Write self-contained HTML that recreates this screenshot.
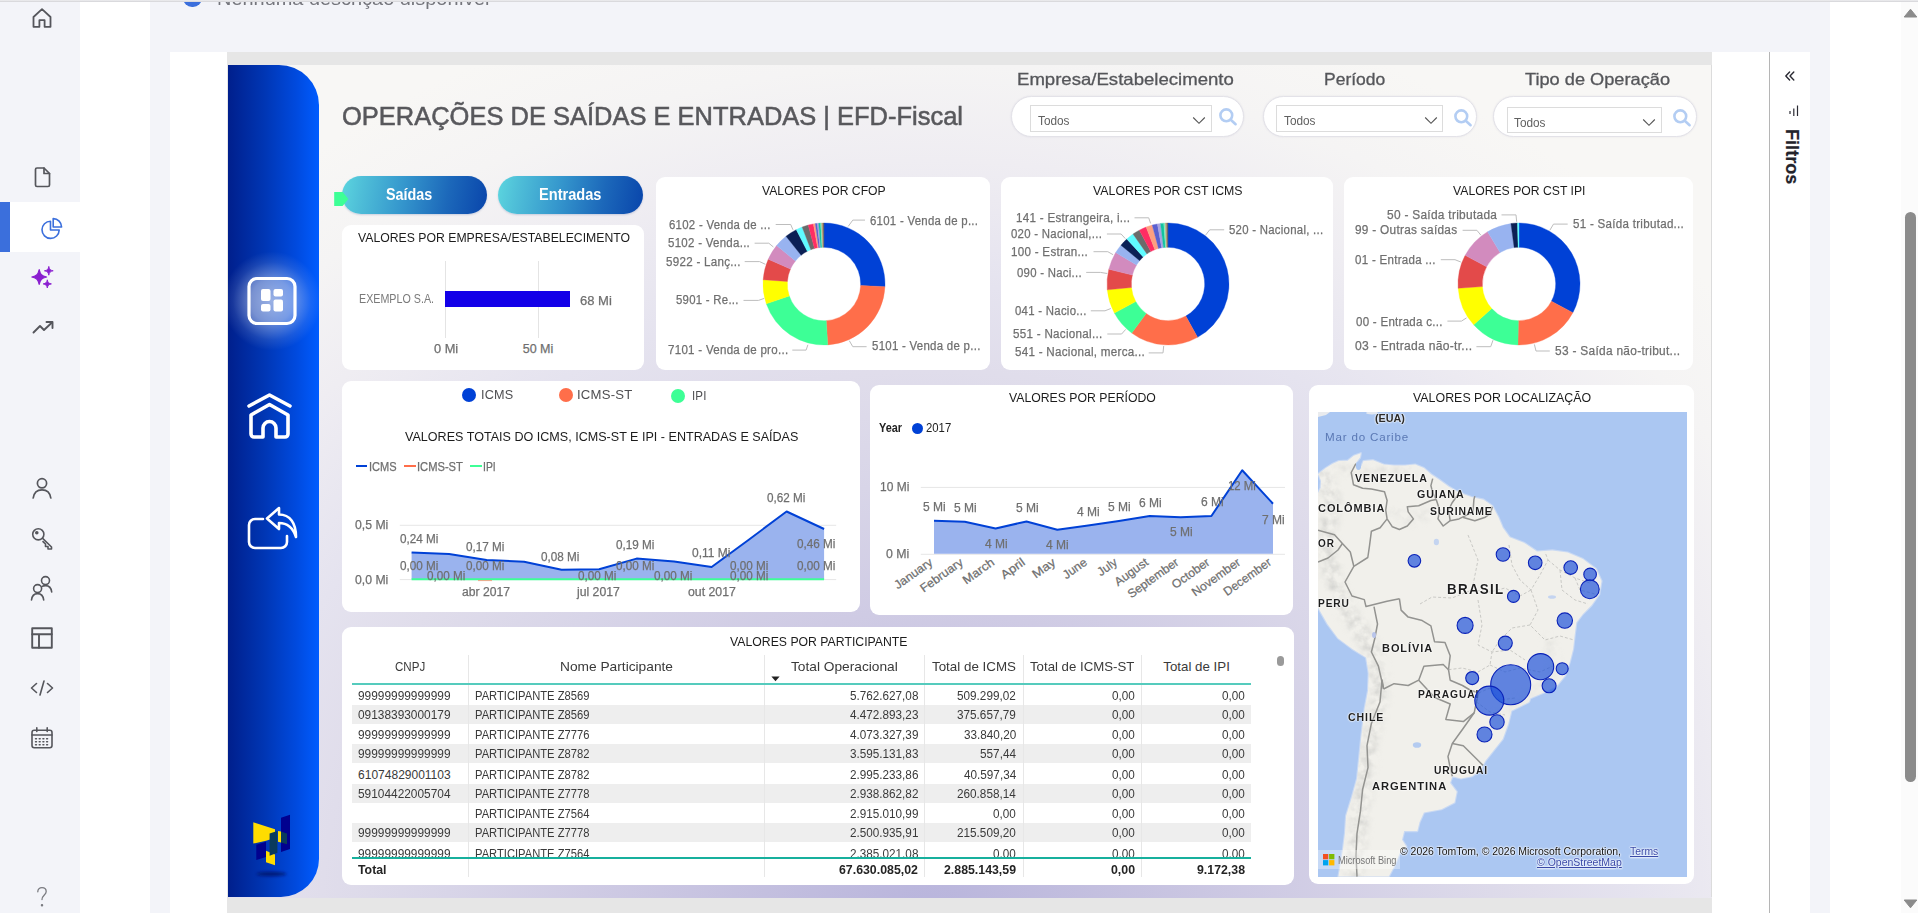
<!DOCTYPE html>
<html lang="pt-br">
<head>
<meta charset="utf-8">
<title>Operações de Saídas e Entradas | EFD-Fiscal</title>
<style>
*{box-sizing:border-box;margin:0;padding:0}
html,body{width:1918px;height:913px;overflow:hidden;background:#f3f4f9;font-family:"Liberation Sans",sans-serif;color:#333}
.abs{position:absolute}
.t{position:absolute;white-space:nowrap;line-height:1;font-family:"Liberation Sans",sans-serif}
.card{position:absolute;background:#fff;border-radius:9px}
#rc{left:170px;top:52px;width:1640px;height:861px;background:#fff}
#band{left:227px;top:52px;width:1485px;height:861px;background:#e6e6e6}
#cv{left:228px;top:65px;width:1484px;height:832.5px;overflow:hidden;background:radial-gradient(ellipse 1050px 956px at 702px 860px,#b8b4dc 0,#c3bfdf 16%,#cfcbe4 33%,#d8d5e8 46%,#e0ddeb 58%,#e5e3ef 67%,#efedf2 80%,#f5f4f4 90%,#f8f7f5 100%)}
#pg{left:-228px;top:-65px;width:1918px;height:913px}
</style>
</head>
<body>
<div class="abs" id="rc"></div>
<div class="abs" id="band"></div>
<div class="abs" style="left:1711px;top:65px;width:1px;height:832px;background:#dcdcdc;z-index:2"></div>
<div class="abs" id="cv"><div class="abs" id="pg">
<!-- sec_head -->
<div class="abs" style="left:228px;top:65px;width:91px;height:832px;border-radius:0 40px 38px 0;background:linear-gradient(90deg,#001f8c 0%,#0036b4 40%,#004ade 75%,#005cff 100%);overflow:hidden"><div class="abs" style="left:-6px;top:186px;width:100px;height:100px;background:radial-gradient(circle,rgba(255,255,255,.55) 0%,rgba(255,255,255,.4) 30%,rgba(255,255,255,.1) 55%,rgba(255,255,255,0) 70%)"></div></div>
<svg class="abs" style="left:246px;top:275px" width="52" height="52" viewBox="0 0 52 52"><rect x="3" y="3.5" width="46" height="45" rx="8" fill="rgba(255,255,255,.12)" stroke="#fff" stroke-width="3.2"/><rect x="15" y="14" width="9.5" height="12" rx="2" fill="#fff"/><rect x="27.5" y="14" width="9.5" height="7.5" rx="2" fill="#fff"/><rect x="15" y="29" width="9.5" height="7.5" rx="2" fill="#fff"/><rect x="27.5" y="24.5" width="9.5" height="12" rx="2" fill="#fff"/></svg>
<svg class="abs" style="left:246px;top:391px" width="48" height="50" viewBox="0 0 48 50" fill="none" stroke="#fff" stroke-width="3.6" stroke-linecap="round" stroke-linejoin="round"><path d="M3 15 L23.5 4 L44 15"/><path d="M5 24 L23.5 13.5 L42 24 V43 a3 3 0 0 1 -3 3 H30 V37 a6.5 6.5 0 0 0 -13 0 V46 H8 a3 3 0 0 1 -3 -3 Z"/></svg>
<svg class="abs" style="left:246px;top:505px" width="54" height="46" viewBox="0 0 54 46" fill="none" stroke="#fff" stroke-width="2.6" stroke-linecap="round" stroke-linejoin="round"><path d="M17 14 H9 a6 6 0 0 0 -6 6 V37 a6 6 0 0 0 6 6 H35 a6 6 0 0 0 6 -6 V31"/><path d="M33 3 L21 13.5 L33 24 V18 C42 18 47 23 50 32 C50 18 44 9.5 33 9.5 Z"/></svg>
<svg class="abs" style="left:248px;top:810px" width="52" height="72" viewBox="248 810 52 72"><defs><filter id="lsh" x="-30%" y="-200%" width="160%" height="500%"><feGaussianBlur stdDeviation="1.6"/></filter></defs><ellipse cx="271.4" cy="874" rx="15" ry="2.2" fill="#001060" opacity=".75" filter="url(#lsh)"/><polygon points="281,817.7 290,814.7 290,849 281,852" fill="#01018f"/><polygon points="253.3,822.3 275,829.2 275,838 266,840.8 253.3,843.6" fill="#ffdc00"/><polygon points="256.3,844.8 266,841.8 266,856.9 256.3,859.9" fill="#01018f"/><polygon points="266,850.8 275,854.5 275,865.3 266,862.3" fill="#ffdc00"/><polygon points="269.6,833.4 277.4,831 277.4,852.7 269.6,855.7" fill="#0a3a5c"/><polygon points="278,831 281,831.6 281,842.4 278,841.8" fill="#ffdc00"/><polygon points="281,831.6 287,833.4 287,844.2 281,842.4" fill="#0a3a5c"/></svg>
<span class="t" style="left:342.30px;top:102.99px;font-size:26px;color:#58585c;transform-origin:0 0;transform:scaleX(0.9799);-webkit-text-stroke:.55px #58585c;">OPERAÇÕES DE SAÍDAS E ENTRADAS | EFD-Fiscal</span>
<span class="t" style="left:1016.90px;top:71.33px;font-size:16.5px;color:#55565a;transform-origin:0 0;transform:scaleX(1.1256);-webkit-text-stroke:.3px #55565a;">Empresa/Estabelecimento</span><div class="abs" style="left:1010.5px;top:95.5px;width:233.0px;height:41px;border-radius:21px;background:#fff;border:1px solid #e3e2e8;box-shadow:0 0 2px rgba(120,120,160,.16)"></div><div class="abs" style="left:1030px;top:105px;width:182px;height:26.599999999999994px;background:#fff;border:1px solid #dcdcdc"></div><span class="t" style="left:1037.50px;top:114.54px;font-size:12px;color:#606060;transform-origin:0 0;transform:scaleX(0.9834);">Todos</span><svg class="abs" style="left:1191.8px;top:115.5px" width="14" height="9" viewBox="0 0 14 9" fill="none" stroke="#555" stroke-width="1.1"><path d="M1.2 1.5 L7 7.3 L12.8 1.5"/></svg><svg class="abs" style="left:1217px;top:106px" width="22" height="22" viewBox="0 0 22 22" fill="none" stroke="#b3cdf3" stroke-width="2.6" stroke-linecap="round"><circle cx="9.3" cy="9.3" r="5.9"/><path d="M14 14 L18.6 18.2"/></svg>
<span class="t" style="left:1324.00px;top:71.33px;font-size:16.5px;color:#55565a;transform-origin:0 0;transform:scaleX(1.0606);-webkit-text-stroke:.3px #55565a;">Período</span><div class="abs" style="left:1262.5px;top:95.5px;width:214.5px;height:41px;border-radius:21px;background:#fff;border:1px solid #e3e2e8;box-shadow:0 0 2px rgba(120,120,160,.16)"></div><div class="abs" style="left:1276px;top:105.3px;width:167px;height:26.299999999999997px;background:#fff;border:1px solid #dcdcdc"></div><span class="t" style="left:1284.00px;top:114.84px;font-size:12px;color:#606060;transform-origin:0 0;transform:scaleX(0.9834);">Todos</span><svg class="abs" style="left:1423.8px;top:115.8px" width="14" height="9" viewBox="0 0 14 9" fill="none" stroke="#555" stroke-width="1.1"><path d="M1.2 1.5 L7 7.3 L12.8 1.5"/></svg><svg class="abs" style="left:1451.5px;top:106.5px" width="22" height="22" viewBox="0 0 22 22" fill="none" stroke="#b3cdf3" stroke-width="2.6" stroke-linecap="round"><circle cx="9.3" cy="9.3" r="5.9"/><path d="M14 14 L18.6 18.2"/></svg>
<span class="t" style="left:1525.00px;top:71.33px;font-size:16.5px;color:#55565a;transform-origin:0 0;transform:scaleX(1.1029);-webkit-text-stroke:.3px #55565a;">Tipo de Operação</span><div class="abs" style="left:1493.3px;top:95.5px;width:203.70000000000005px;height:41px;border-radius:21px;background:#fff;border:1px solid #e3e2e8;box-shadow:0 0 2px rgba(120,120,160,.16)"></div><div class="abs" style="left:1506.5px;top:106.7px;width:155.5px;height:26.10000000000001px;background:#fff;border:1px solid #dcdcdc"></div><span class="t" style="left:1514.30px;top:116.84px;font-size:12px;color:#606060;transform-origin:0 0;transform:scaleX(0.9834);">Todos</span><svg class="abs" style="left:1642px;top:117.5px" width="14" height="9" viewBox="0 0 14 9" fill="none" stroke="#555" stroke-width="1.1"><path d="M1.2 1.5 L7 7.3 L12.8 1.5"/></svg><svg class="abs" style="left:1670.5px;top:106.5px" width="22" height="22" viewBox="0 0 22 22" fill="none" stroke="#b3cdf3" stroke-width="2.6" stroke-linecap="round"><circle cx="9.3" cy="9.3" r="5.9"/><path d="M14 14 L18.6 18.2"/></svg>
<!-- sec_row1 -->
<div class="abs" style="left:342px;top:176px;width:145px;height:37.5px;border-radius:19px;background:linear-gradient(100deg,#5cd6df 0%,#4fbfd8 14%,#3597cd 42%,#1c68ba 72%,#0945ab 100%);box-shadow:0 1px 2px rgba(0,40,120,.18)"></div>
<span class="t" style="left:385.80px;top:187.46px;font-size:16px;color:#fff;font-weight:bold;transform-origin:0 0;transform:scaleX(0.8955);">Saídas</span>
<div class="abs" style="left:497.7px;top:176px;width:145px;height:37.5px;border-radius:19px;background:linear-gradient(100deg,#5cd6df 0%,#4fbfd8 14%,#3597cd 42%,#1c68ba 72%,#0945ab 100%);box-shadow:0 1px 2px rgba(0,40,120,.18)"></div>
<span class="t" style="left:539.20px;top:187.46px;font-size:16px;color:#fff;font-weight:bold;transform-origin:0 0;transform:scaleX(0.9114);">Entradas</span>
<svg class="abs" style="left:333px;top:191px" width="17" height="17" viewBox="0 0 17 17"><path d="M1.2 1 H9.6 L15.4 8 L9.6 15 H1.2 Z" fill="#3dff96"/></svg>
<div class="card" style="left:342px;top:225px;width:302px;height:144.5px"></div>
<span class="t" style="left:357.80px;top:231.27px;font-size:13.5px;color:#1c1c1c;transform-origin:0 0;transform:scaleX(0.9064);">VALORES POR EMPRESA/ESTABELECIMENTO</span>
<div class="abs" style="left:445px;top:261px;width:1px;height:77px;background:#e4e4e4"></div>
<div class="abs" style="left:537.5px;top:261px;width:1px;height:77px;background:#e4e4e4"></div>
<div class="abs" style="left:445px;top:291px;width:125px;height:16px;background:#1300e8"></div>
<span class="t" style="left:359.40px;top:293.14px;font-size:12px;color:#7a7a7a;transform-origin:0 0;transform:scaleX(0.8925);">EXEMPLO S.A.</span>
<span class="t" style="left:579.70px;top:294.72px;font-size:12.5px;color:#6f6f6f;-webkit-text-stroke:.25px #6f6f6f;transform-origin:0 0;transform:scaleX(1.0400);">68 Mi</span>
<span class="t" style="left:433.70px;top:343.22px;font-size:12.5px;color:#6f6f6f;-webkit-text-stroke:.25px #6f6f6f;transform-origin:0 0;transform:scaleX(1.0243);">0 Mi</span>
<span class="t" style="left:522.70px;top:343.22px;font-size:12.5px;color:#6f6f6f;-webkit-text-stroke:.25px #6f6f6f;">50 Mi</span>
<div class="card" style="left:656px;top:177px;width:334px;height:193px"></div>
<span class="t" style="left:761.95px;top:184.37px;font-size:13.5px;color:#1c1c1c;transform-origin:0 0;transform:scaleX(0.9027);">VALORES POR CFOP</span>
<svg class="abs" style="left:760px;top:220px" width="128" height="128" viewBox="760 220 128 128" shape-rendering="geometricPrecision"><path d="M824.00 223.00A61 61 0 0 1 884.94 286.66L860.67 285.60A36.7 36.7 0 0 0 824.00 247.30Z" fill="#0041d6" stroke="#0041d6" stroke-width=".35"/><path d="M884.94 286.66A61 61 0 0 1 827.72 344.89L826.24 320.63A36.7 36.7 0 0 0 860.67 285.60Z" fill="#ff6e4a" stroke="#ff6e4a" stroke-width=".35"/><path d="M827.72 344.89A61 61 0 0 1 766.32 303.86L789.30 295.95A36.7 36.7 0 0 0 826.24 320.63Z" fill="#3dff96" stroke="#3dff96" stroke-width=".35"/><path d="M766.32 303.86A61 61 0 0 1 763.15 279.74L787.39 281.44A36.7 36.7 0 0 0 789.30 295.95Z" fill="#ffff00" stroke="#ffff00" stroke-width=".35"/><path d="M763.15 279.74A61 61 0 0 1 768.27 259.19L790.47 269.07A36.7 36.7 0 0 0 787.39 281.44Z" fill="#e34a4a" stroke="#e34a4a" stroke-width=".35"/><path d="M768.27 259.19A61 61 0 0 1 776.59 245.61L795.48 260.90A36.7 36.7 0 0 0 790.47 269.07Z" fill="#d28bbe" stroke="#d28bbe" stroke-width=".35"/><path d="M776.59 245.61A61 61 0 0 1 786.03 236.26L801.15 255.28A36.7 36.7 0 0 0 795.48 260.90Z" fill="#98b3f0" stroke="#98b3f0" stroke-width=".35"/><path d="M786.03 236.26A61 61 0 0 1 796.31 229.65L807.34 251.30A36.7 36.7 0 0 0 801.15 255.28Z" fill="#0b2055" stroke="#0b2055" stroke-width=".35"/><path d="M796.31 229.65A61 61 0 0 1 802.14 227.05L810.85 249.74A36.7 36.7 0 0 0 807.34 251.30Z" fill="#5ffbff" stroke="#5ffbff" stroke-width=".35"/><path d="M802.14 227.05A61 61 0 0 1 808.21 225.08L814.50 248.55A36.7 36.7 0 0 0 810.85 249.74Z" fill="#6b6b6b" stroke="#6b6b6b" stroke-width=".35"/><path d="M808.21 225.08A61 61 0 0 1 813.41 223.93L817.63 247.86A36.7 36.7 0 0 0 814.50 248.55Z" fill="#ff2d63" stroke="#ff2d63" stroke-width=".35"/><path d="M813.41 223.93A61 61 0 0 1 815.30 223.62L818.77 247.68A36.7 36.7 0 0 0 817.63 247.86Z" fill="#ffa080" stroke="#ffa080" stroke-width=".35"/><path d="M815.30 223.62A61 61 0 0 1 817.20 223.38L819.91 247.53A36.7 36.7 0 0 0 818.77 247.68Z" fill="#5b60d0" stroke="#5b60d0" stroke-width=".35"/><path d="M817.20 223.38A61 61 0 0 1 818.68 223.23L820.80 247.44A36.7 36.7 0 0 0 819.91 247.53Z" fill="#a9a3e0" stroke="#a9a3e0" stroke-width=".35"/><path d="M818.68 223.23A61 61 0 0 1 820.59 223.10L821.95 247.36A36.7 36.7 0 0 0 820.80 247.44Z" fill="#12c2a0" stroke="#12c2a0" stroke-width=".35"/><path d="M820.59 223.10A61 61 0 0 1 821.66 223.04L822.59 247.33A36.7 36.7 0 0 0 821.95 247.36Z" fill="#7af0c0" stroke="#7af0c0" stroke-width=".35"/><path d="M821.66 223.04A61 61 0 0 1 822.94 223.01L823.36 247.31A36.7 36.7 0 0 0 822.59 247.33Z" fill="#c9a27a" stroke="#c9a27a" stroke-width=".35"/><path d="M822.94 223.01A61 61 0 0 1 824.00 223.00L824.00 247.30A36.7 36.7 0 0 0 823.36 247.31Z" fill="#6b6b6b" stroke="#6b6b6b" stroke-width=".35"/></svg>
<svg class="abs" style="left:656px;top:177px" width="334" height="193" viewBox="656 177 334 193" fill="none" stroke="#bdbdbd" stroke-width="1"><polyline points="848.2,226.4 852.8,220.1 865.0,220.1"/><polyline points="775.7,224.5 790.7,224.5 793.0,229.8"/><polyline points="754.6,243.2 768.8,243.2 773.4,247.0"/><polyline points="744.7,261.6 759.6,261.6 765.4,264.3"/><polyline points="743.5,300.4 758.5,300.4 764.2,298.4"/><polyline points="792.3,350.1 806.1,350.1 807.9,344.8"/><polyline points="866.6,346.7 852.8,346.7 849.3,340.7"/></svg>
<span class="t" style="left:870.00px;top:215.42px;font-size:12.5px;color:#6f6f6f;-webkit-text-stroke:.25px #6f6f6f;transform-origin:0 0;transform:scaleX(0.9124);letter-spacing:.3px;">6101 - Venda de p...</span>
<span class="t" style="left:669.40px;top:218.82px;font-size:12.5px;color:#6f6f6f;-webkit-text-stroke:.25px #6f6f6f;transform-origin:0 0;transform:scaleX(0.9125);letter-spacing:.3px;">6102 - Venda de ...</span>
<span class="t" style="left:668.30px;top:237.22px;font-size:12.5px;color:#6f6f6f;-webkit-text-stroke:.25px #6f6f6f;transform-origin:0 0;transform:scaleX(0.9194);letter-spacing:.3px;">5102 - Venda...</span>
<span class="t" style="left:666.00px;top:256.22px;font-size:12.5px;color:#6f6f6f;-webkit-text-stroke:.25px #6f6f6f;transform-origin:0 0;transform:scaleX(0.9276);letter-spacing:.3px;">5922 - Lanç...</span>
<span class="t" style="left:676.30px;top:294.12px;font-size:12.5px;color:#6f6f6f;-webkit-text-stroke:.25px #6f6f6f;transform-origin:0 0;transform:scaleX(0.9097);letter-spacing:.3px;">5901 - Re...</span>
<span class="t" style="left:667.60px;top:344.22px;font-size:12.5px;color:#6f6f6f;-webkit-text-stroke:.25px #6f6f6f;transform-origin:0 0;transform:scaleX(0.9239);letter-spacing:.3px;">7101 - Venda de pro...</span>
<span class="t" style="left:871.90px;top:340.32px;font-size:12.5px;color:#6f6f6f;-webkit-text-stroke:.25px #6f6f6f;transform-origin:0 0;transform:scaleX(0.9157);letter-spacing:.3px;">5101 - Venda de p...</span>
<div class="card" style="left:1001px;top:177px;width:332px;height:193px"></div>
<span class="t" style="left:1093.00px;top:184.37px;font-size:13.5px;color:#1c1c1c;transform-origin:0 0;transform:scaleX(0.9133);">VALORES POR CST ICMS</span>
<svg class="abs" style="left:1103.8px;top:220px" width="128" height="128" viewBox="1103.8 220 128 128" shape-rendering="geometricPrecision"><path d="M1167.80 223.00A61 61 0 0 1 1197.37 337.35L1185.59 316.10A36.7 36.7 0 0 0 1167.80 247.30Z" fill="#0041d6" stroke="#0041d6" stroke-width=".35"/><path d="M1197.37 337.35A61 61 0 0 1 1131.52 333.04L1145.97 313.50A36.7 36.7 0 0 0 1185.59 316.10Z" fill="#ff6e4a" stroke="#ff6e4a" stroke-width=".35"/><path d="M1131.52 333.04A61 61 0 0 1 1114.19 313.11L1135.55 301.51A36.7 36.7 0 0 0 1145.97 313.50Z" fill="#3dff96" stroke="#3dff96" stroke-width=".35"/><path d="M1114.19 313.11A61 61 0 0 1 1107.08 289.85L1131.27 287.52A36.7 36.7 0 0 0 1135.55 301.51Z" fill="#ffff00" stroke="#ffff00" stroke-width=".35"/><path d="M1107.08 289.85A61 61 0 0 1 1108.61 269.24L1132.19 275.12A36.7 36.7 0 0 0 1131.27 287.52Z" fill="#e34a4a" stroke="#e34a4a" stroke-width=".35"/><path d="M1108.61 269.24A61 61 0 0 1 1115.51 252.58L1136.34 265.10A36.7 36.7 0 0 0 1132.19 275.12Z" fill="#d28bbe" stroke="#d28bbe" stroke-width=".35"/><path d="M1115.51 252.58A61 61 0 0 1 1120.73 245.20L1139.48 260.66A36.7 36.7 0 0 0 1136.34 265.10Z" fill="#98b3f0" stroke="#98b3f0" stroke-width=".35"/><path d="M1120.73 245.20A61 61 0 0 1 1126.59 239.03L1143.01 256.94A36.7 36.7 0 0 0 1139.48 260.66Z" fill="#0b2055" stroke="#0b2055" stroke-width=".35"/><path d="M1126.59 239.03A61 61 0 0 1 1132.81 234.03L1146.75 253.94A36.7 36.7 0 0 0 1143.01 256.94Z" fill="#5ffbff" stroke="#5ffbff" stroke-width=".35"/><path d="M1132.81 234.03A61 61 0 0 1 1139.16 230.14L1150.57 251.60A36.7 36.7 0 0 0 1146.75 253.94Z" fill="#6b6b6b" stroke="#6b6b6b" stroke-width=".35"/><path d="M1139.16 230.14A61 61 0 0 1 1145.94 227.05L1154.65 249.74A36.7 36.7 0 0 0 1150.57 251.60Z" fill="#ff2d63" stroke="#ff2d63" stroke-width=".35"/><path d="M1145.94 227.05A61 61 0 0 1 1152.01 225.08L1158.30 248.55A36.7 36.7 0 0 0 1154.65 249.74Z" fill="#ffa080" stroke="#ffa080" stroke-width=".35"/><path d="M1152.01 225.08A61 61 0 0 1 1157.21 223.93L1161.43 247.86A36.7 36.7 0 0 0 1158.30 248.55Z" fill="#5b60d0" stroke="#5b60d0" stroke-width=".35"/><path d="M1157.21 223.93A61 61 0 0 1 1160.37 223.45L1163.33 247.57A36.7 36.7 0 0 0 1161.43 247.86Z" fill="#a9a3e0" stroke="#a9a3e0" stroke-width=".35"/><path d="M1160.37 223.45A61 61 0 0 1 1163.54 223.15L1165.24 247.39A36.7 36.7 0 0 0 1163.33 247.57Z" fill="#12c2a0" stroke="#12c2a0" stroke-width=".35"/><path d="M1163.54 223.15A61 61 0 0 1 1165.03 223.06L1166.14 247.34A36.7 36.7 0 0 0 1165.24 247.39Z" fill="#7af0c0" stroke="#7af0c0" stroke-width=".35"/><path d="M1165.03 223.06A61 61 0 0 1 1166.52 223.01L1167.03 247.31A36.7 36.7 0 0 0 1166.14 247.34Z" fill="#c9a27a" stroke="#c9a27a" stroke-width=".35"/><path d="M1166.52 223.01A61 61 0 0 1 1167.80 223.00L1167.80 247.30A36.7 36.7 0 0 0 1167.03 247.31Z" fill="#6b6b6b" stroke="#6b6b6b" stroke-width=".35"/></svg>
<svg class="abs" style="left:1001px;top:177px" width="332" height="193" viewBox="1001 177 332 193" fill="none" stroke="#bdbdbd" stroke-width="1"><polyline points="1134.5,217.8 1148.7,217.8 1150.6,223.4"/><polyline points="1106.9,234.0 1121.1,234.0 1125.3,238.6"/><polyline points="1093.5,251.7 1107.8,251.7 1113.1,254.7"/><polyline points="1086.2,272.4 1100.4,272.4 1107.3,273.5"/><polyline points="1090.8,310.8 1105.0,310.8 1110.8,308.5"/><polyline points="1107.3,334.0 1121.6,334.0 1125.7,329.4"/><polyline points="1148.7,352.9 1163.0,352.9 1163.7,346.0"/><polyline points="1224.2,229.8 1209.7,229.8 1205.8,234.9"/></svg>
<span class="t" style="left:1016.00px;top:212.02px;font-size:12.5px;color:#6f6f6f;-webkit-text-stroke:.25px #6f6f6f;transform-origin:0 0;transform:scaleX(0.9297);letter-spacing:.3px;">141 - Estrangeira, i...</span>
<span class="t" style="left:1011.20px;top:228.12px;font-size:12.5px;color:#6f6f6f;-webkit-text-stroke:.25px #6f6f6f;transform-origin:0 0;transform:scaleX(0.9119);letter-spacing:.3px;">020 - Nacional,...</span>
<span class="t" style="left:1011.40px;top:246.02px;font-size:12.5px;color:#6f6f6f;-webkit-text-stroke:.25px #6f6f6f;transform-origin:0 0;transform:scaleX(0.9287);letter-spacing:.3px;">100 - Estran...</span>
<span class="t" style="left:1016.70px;top:266.92px;font-size:12.5px;color:#6f6f6f;-webkit-text-stroke:.25px #6f6f6f;transform-origin:0 0;transform:scaleX(0.9103);letter-spacing:.3px;">090 - Naci...</span>
<span class="t" style="left:1014.60px;top:305.12px;font-size:12.5px;color:#6f6f6f;-webkit-text-stroke:.25px #6f6f6f;transform-origin:0 0;transform:scaleX(0.9116);letter-spacing:.3px;">041 - Nacio...</span>
<span class="t" style="left:1013.20px;top:328.12px;font-size:12.5px;color:#6f6f6f;-webkit-text-stroke:.25px #6f6f6f;transform-origin:0 0;transform:scaleX(0.9311);letter-spacing:.3px;">551 - Nacional...</span>
<span class="t" style="left:1014.60px;top:346.12px;font-size:12.5px;color:#6f6f6f;-webkit-text-stroke:.25px #6f6f6f;transform-origin:0 0;transform:scaleX(0.9292);letter-spacing:.3px;">541 - Nacional, merca...</span>
<span class="t" style="left:1229.20px;top:224.22px;font-size:12.5px;color:#6f6f6f;-webkit-text-stroke:.25px #6f6f6f;transform-origin:0 0;transform:scaleX(0.9106);letter-spacing:.3px;">520 - Nacional, ...</span>
<div class="card" style="left:1344px;top:177px;width:349px;height:193px"></div>
<span class="t" style="left:1453.15px;top:184.37px;font-size:13.5px;color:#1c1c1c;transform-origin:0 0;transform:scaleX(0.9041);">VALORES POR CST IPI</span>
<svg class="abs" style="left:1455.4px;top:220px" width="128" height="128" viewBox="1455.4 220 128 128" shape-rendering="geometricPrecision"><path d="M1519.40 223.00A61 61 0 0 1 1573.26 312.64L1551.80 301.23A36.7 36.7 0 0 0 1519.40 247.30Z" fill="#0041d6" stroke="#0041d6" stroke-width=".35"/><path d="M1573.26 312.64A61 61 0 0 1 1518.34 344.99L1518.76 320.69A36.7 36.7 0 0 0 1551.80 301.23Z" fill="#ff6e4a" stroke="#ff6e4a" stroke-width=".35"/><path d="M1518.34 344.99A61 61 0 0 1 1474.07 324.82L1492.13 308.56A36.7 36.7 0 0 0 1518.76 320.69Z" fill="#3dff96" stroke="#3dff96" stroke-width=".35"/><path d="M1474.07 324.82A61 61 0 0 1 1458.55 288.26L1482.79 286.56A36.7 36.7 0 0 0 1492.13 308.56Z" fill="#ffff00" stroke="#ffff00" stroke-width=".35"/><path d="M1458.55 288.26A61 61 0 0 1 1465.54 255.36L1487.00 266.77A36.7 36.7 0 0 0 1482.79 286.56Z" fill="#e34a4a" stroke="#e34a4a" stroke-width=".35"/><path d="M1465.54 255.36A61 61 0 0 1 1487.98 231.71L1500.50 252.54A36.7 36.7 0 0 0 1487.00 266.77Z" fill="#d28bbe" stroke="#d28bbe" stroke-width=".35"/><path d="M1487.98 231.71A61 61 0 0 1 1511.33 223.54L1514.55 247.62A36.7 36.7 0 0 0 1500.50 252.54Z" fill="#98b3f0" stroke="#98b3f0" stroke-width=".35"/><path d="M1511.33 223.54A61 61 0 0 1 1517.91 223.02L1518.50 247.31A36.7 36.7 0 0 0 1514.55 247.62Z" fill="#0b2055" stroke="#0b2055" stroke-width=".35"/><path d="M1517.91 223.02A61 61 0 0 1 1519.40 223.00L1519.40 247.30A36.7 36.7 0 0 0 1518.50 247.31Z" fill="#5ffbff" stroke="#5ffbff" stroke-width=".35"/></svg>
<svg class="abs" style="left:1344px;top:177px" width="349" height="193" viewBox="1344 177 349 193" fill="none" stroke="#bdbdbd" stroke-width="1"><polyline points="1501.5,214.9 1516.0,214.9 1516.7,221.8"/><polyline points="1462.6,230.3 1476.9,230.3 1480.8,235.1"/><polyline points="1440.8,259.7 1455.0,259.7 1460.8,262.0"/><polyline points="1447.4,321.1 1461.5,321.1 1466.5,317.9"/><polyline points="1476.4,346.7 1490.7,346.7 1493.0,340.2"/><polyline points="1567.7,224.1 1553.5,224.1 1549.8,230.3"/><polyline points="1549.8,351.0 1536.0,351.0 1534.4,344.4"/></svg>
<span class="t" style="left:1386.70px;top:209.22px;font-size:12.5px;color:#6f6f6f;-webkit-text-stroke:.25px #6f6f6f;transform-origin:0 0;transform:scaleX(0.9517);letter-spacing:.3px;">50 - Saída tributada</span>
<span class="t" style="left:1355.40px;top:224.22px;font-size:12.5px;color:#6f6f6f;-webkit-text-stroke:.25px #6f6f6f;transform-origin:0 0;transform:scaleX(0.9461);letter-spacing:.3px;">99 - Outras saídas</span>
<span class="t" style="left:1355.40px;top:253.72px;font-size:12.5px;color:#6f6f6f;-webkit-text-stroke:.25px #6f6f6f;transform-origin:0 0;transform:scaleX(0.9236);letter-spacing:.3px;">01 - Entrada ...</span>
<span class="t" style="left:1356.10px;top:315.52px;font-size:12.5px;color:#6f6f6f;-webkit-text-stroke:.25px #6f6f6f;transform-origin:0 0;transform:scaleX(0.9219);letter-spacing:.3px;">00 - Entrada c...</span>
<span class="t" style="left:1354.50px;top:340.32px;font-size:12.5px;color:#6f6f6f;-webkit-text-stroke:.25px #6f6f6f;transform-origin:0 0;transform:scaleX(0.9674);letter-spacing:.3px;">03 - Entrada não-tr...</span>
<span class="t" style="left:1572.80px;top:218.22px;font-size:12.5px;color:#6f6f6f;-webkit-text-stroke:.25px #6f6f6f;transform-origin:0 0;transform:scaleX(0.9268);letter-spacing:.3px;">51 - Saída tributad...</span>
<span class="t" style="left:1555.10px;top:345.42px;font-size:12.5px;color:#6f6f6f;-webkit-text-stroke:.25px #6f6f6f;transform-origin:0 0;transform:scaleX(0.9530);letter-spacing:.3px;">53 - Saída não-tribut...</span>
<!-- sec_row2 -->
<div class="card" style="left:341.5px;top:380.5px;width:518px;height:231.5px"></div>
<div class="abs" style="left:462px;top:387.5px;width:14px;height:14px;border-radius:7px;background:#0041d6"></div>
<span class="t" style="left:480.60px;top:388.37px;font-size:13.5px;color:#4f4f52;transform-origin:0 0;transform:scaleX(0.9374);letter-spacing:.2px;">ICMS</span>
<div class="abs" style="left:558.5px;top:387.5px;width:14px;height:14px;border-radius:7px;background:#ff6e4a"></div>
<span class="t" style="left:577.20px;top:388.37px;font-size:13.5px;color:#4f4f52;transform-origin:0 0;transform:scaleX(0.9735);letter-spacing:.2px;">ICMS-ST</span>
<div class="abs" style="left:671px;top:388.5px;width:14px;height:14px;border-radius:7px;background:#3dff96"></div>
<span class="t" style="left:691.80px;top:388.77px;font-size:13.5px;color:#4f4f52;transform-origin:0 0;transform:scaleX(0.8533);letter-spacing:.2px;">IPI</span>
<span class="t" style="left:405.30px;top:429.77px;font-size:13.5px;color:#1c1c1c;transform-origin:0 0;transform:scaleX(0.9309);">VALORES TOTAIS DO ICMS, ICMS-ST E IPI - ENTRADAS E SAÍDAS</span>
<div class="abs" style="left:355.9px;top:465px;width:11.5px;height:2px;background:#0041d6"></div>
<span class="t" style="left:369.40px;top:460.84px;font-size:12px;color:#6f6f6f;-webkit-text-stroke:.25px #6f6f6f;transform-origin:0 0;transform:scaleX(0.9200);">ICMS</span>
<div class="abs" style="left:404px;top:465px;width:11.5px;height:2px;background:#ff6e4a"></div>
<span class="t" style="left:417.30px;top:460.84px;font-size:12px;color:#6f6f6f;-webkit-text-stroke:.25px #6f6f6f;transform-origin:0 0;transform:scaleX(0.9302);">ICMS-ST</span>
<div class="abs" style="left:470.2px;top:465px;width:11.5px;height:2px;background:#3dff96"></div>
<span class="t" style="left:483.40px;top:460.84px;font-size:12px;color:#6f6f6f;-webkit-text-stroke:.25px #6f6f6f;transform-origin:0 0;transform:scaleX(0.8656);">IPI</span>
<svg class="abs" style="left:341px;top:480px" width="519" height="110" viewBox="341 480 519 110"><path d="M399.8 525.3H836.2M399.8 579.6H836.2" stroke="#e6e6e6" stroke-width="1" fill="none"/><polygon points="411.6,579.2 411.6,552.4 449.1,554.0 486.6,560.0 524.1,561.7 561.6,569.8 599.1,569.3 636.6,558.6 674.1,561.4 711.6,567.0 749.1,539.5 786.6,511.5 824.1,529.0 824.1,579.2" fill="#9ab3ee"/><polyline points="411.6,552.4 449.1,554.0 486.6,560.0 524.1,561.7 561.6,569.8 599.1,569.3 636.6,558.6 674.1,561.4 711.6,567.0 749.1,539.5 786.6,511.5 824.1,529.0" fill="none" stroke="#0041d6" stroke-width="2" stroke-linejoin="round"/><path d="M411.6 579.2H824.1" stroke="#3dff96" stroke-width="2" fill="none"/><path d="M478 580.6H492" stroke="#ff6e4a" stroke-width="1" fill="none" opacity=".6"/></svg>
<span class="t" style="left:355.30px;top:518.82px;font-size:12.5px;color:#6f6f6f;-webkit-text-stroke:.25px #6f6f6f;transform-origin:0 0;transform:scaleX(0.9781);">0,5 Mi</span>
<span class="t" style="left:355.30px;top:573.52px;font-size:12.5px;color:#6f6f6f;-webkit-text-stroke:.25px #6f6f6f;transform-origin:0 0;transform:scaleX(0.9781);">0,0 Mi</span>
<span class="t" style="left:462.25px;top:585.82px;font-size:12.5px;color:#6f6f6f;-webkit-text-stroke:.25px #6f6f6f;transform-origin:0 0;transform:scaleX(0.9704);">abr 2017</span>
<span class="t" style="left:577.20px;top:585.82px;font-size:12.5px;color:#6f6f6f;-webkit-text-stroke:.25px #6f6f6f;transform-origin:0 0;transform:scaleX(0.9772);">jul 2017</span>
<span class="t" style="left:688.05px;top:585.82px;font-size:12.5px;color:#6f6f6f;-webkit-text-stroke:.25px #6f6f6f;transform-origin:0 0;transform:scaleX(0.9841);">out 2017</span>
<span class="t" style="left:400.40px;top:532.92px;font-size:12.5px;color:#6f6f6f;-webkit-text-stroke:.25px #6f6f6f;transform-origin:0 0;transform:scaleX(0.9366);">0,24 Mi</span>
<span class="t" style="left:465.70px;top:540.52px;font-size:12.5px;color:#6f6f6f;-webkit-text-stroke:.25px #6f6f6f;transform-origin:0 0;transform:scaleX(0.9366);">0,17 Mi</span>
<span class="t" style="left:541.10px;top:550.62px;font-size:12.5px;color:#6f6f6f;-webkit-text-stroke:.25px #6f6f6f;transform-origin:0 0;transform:scaleX(0.9366);">0,08 Mi</span>
<span class="t" style="left:616.30px;top:538.82px;font-size:12.5px;color:#6f6f6f;-webkit-text-stroke:.25px #6f6f6f;transform-origin:0 0;transform:scaleX(0.9366);">0,19 Mi</span>
<span class="t" style="left:691.50px;top:547.02px;font-size:12.5px;color:#6f6f6f;-webkit-text-stroke:.25px #6f6f6f;transform-origin:0 0;transform:scaleX(0.9581);">0,11 Mi</span>
<span class="t" style="left:766.90px;top:491.52px;font-size:12.5px;color:#6f6f6f;-webkit-text-stroke:.25px #6f6f6f;transform-origin:0 0;transform:scaleX(0.9366);">0,62 Mi</span>
<span class="t" style="left:797.30px;top:538.02px;font-size:12.5px;color:#6f6f6f;-webkit-text-stroke:.25px #6f6f6f;transform-origin:0 0;transform:scaleX(0.9366);">0,46 Mi</span>
<span class="t" style="left:400.40px;top:559.72px;font-size:12.5px;color:#6f6f6f;-webkit-text-stroke:.25px #6f6f6f;transform-origin:0 0;transform:scaleX(0.9366);">0,00 Mi</span>
<span class="t" style="left:465.70px;top:559.72px;font-size:12.5px;color:#6f6f6f;-webkit-text-stroke:.25px #6f6f6f;transform-origin:0 0;transform:scaleX(0.9366);">0,00 Mi</span>
<span class="t" style="left:616.30px;top:559.72px;font-size:12.5px;color:#6f6f6f;-webkit-text-stroke:.25px #6f6f6f;transform-origin:0 0;transform:scaleX(0.9366);">0,00 Mi</span>
<span class="t" style="left:729.80px;top:559.72px;font-size:12.5px;color:#6f6f6f;-webkit-text-stroke:.25px #6f6f6f;transform-origin:0 0;transform:scaleX(0.9366);">0,00 Mi</span>
<span class="t" style="left:797.30px;top:559.72px;font-size:12.5px;color:#6f6f6f;-webkit-text-stroke:.25px #6f6f6f;transform-origin:0 0;transform:scaleX(0.9366);">0,00 Mi</span>
<span class="t" style="left:427.40px;top:569.82px;font-size:12.5px;color:#6f6f6f;-webkit-text-stroke:.25px #6f6f6f;transform-origin:0 0;transform:scaleX(0.9366);">0,00 Mi</span>
<span class="t" style="left:578.30px;top:569.82px;font-size:12.5px;color:#6f6f6f;-webkit-text-stroke:.25px #6f6f6f;transform-origin:0 0;transform:scaleX(0.9366);">0,00 Mi</span>
<span class="t" style="left:654.30px;top:569.82px;font-size:12.5px;color:#6f6f6f;-webkit-text-stroke:.25px #6f6f6f;transform-origin:0 0;transform:scaleX(0.9366);">0,00 Mi</span>
<span class="t" style="left:729.80px;top:569.82px;font-size:12.5px;color:#6f6f6f;-webkit-text-stroke:.25px #6f6f6f;transform-origin:0 0;transform:scaleX(0.9366);">0,00 Mi</span>
<div class="card" style="left:869.5px;top:384.5px;width:423.5px;height:230.5px"></div>
<span class="t" style="left:1008.50px;top:390.97px;font-size:13.5px;color:#1c1c1c;transform-origin:0 0;transform:scaleX(0.9073);">VALORES POR PERÍODO</span>
<span class="t" style="left:878.60px;top:422.34px;font-size:12px;color:#222;font-weight:bold;transform-origin:0 0;transform:scaleX(0.9070);">Year</span>
<div class="abs" style="left:911.7px;top:422.6px;width:11.6px;height:11.6px;border-radius:6px;background:#0041d6"></div>
<span class="t" style="left:925.70px;top:422.02px;font-size:12.5px;color:#222;transform-origin:0 0;transform:scaleX(0.9061);">2017</span>
<svg class="abs" style="left:870px;top:440px" width="423" height="120" viewBox="870 440 423 120"><path d="M920.8 487.4H1285M920.8 554.3H1285" stroke="#e6e6e6" stroke-width="1" fill="none"/><polygon points="934.0,553.8 934.0,520.7 964.8,521.8 995.6,528.4 1026.5,521.5 1057.3,529.8 1088.1,525.6 1118.9,521.0 1149.7,516.0 1180.6,517.2 1211.4,516.0 1242.2,470.3 1273.0,503.7 1273.0,553.8" fill="#9ab3ee"/><polyline points="934.0,520.7 964.8,521.8 995.6,528.4 1026.5,521.5 1057.3,529.8 1088.1,525.6 1118.9,521.0 1149.7,516.0 1180.6,517.2 1211.4,516.0 1242.2,470.3 1273.0,503.7" fill="none" stroke="#0041d6" stroke-width="2" stroke-linejoin="round"/></svg>
<span class="t" style="left:880.00px;top:481.22px;font-size:12.5px;color:#6f6f6f;-webkit-text-stroke:.25px #6f6f6f;transform-origin:0 0;transform:scaleX(0.9582);">10 Mi</span>
<span class="t" style="left:886.00px;top:548.02px;font-size:12.5px;color:#6f6f6f;-webkit-text-stroke:.25px #6f6f6f;transform-origin:0 0;transform:scaleX(0.9862);">0 Mi</span>
<span class="t" style="left:923.00px;top:501.42px;font-size:12.5px;color:#6f6f6f;-webkit-text-stroke:.25px #6f6f6f;transform-origin:0 0;transform:scaleX(0.9608);">5 Mi</span>
<span class="t" style="left:953.70px;top:502.32px;font-size:12.5px;color:#6f6f6f;-webkit-text-stroke:.25px #6f6f6f;transform-origin:0 0;transform:scaleX(0.9608);">5 Mi</span>
<span class="t" style="left:984.60px;top:537.92px;font-size:12.5px;color:#6f6f6f;-webkit-text-stroke:.25px #6f6f6f;transform-origin:0 0;transform:scaleX(0.9608);">4 Mi</span>
<span class="t" style="left:1015.60px;top:502.32px;font-size:12.5px;color:#6f6f6f;-webkit-text-stroke:.25px #6f6f6f;transform-origin:0 0;transform:scaleX(0.9608);">5 Mi</span>
<span class="t" style="left:1046.30px;top:539.22px;font-size:12.5px;color:#6f6f6f;-webkit-text-stroke:.25px #6f6f6f;transform-origin:0 0;transform:scaleX(0.9608);">4 Mi</span>
<span class="t" style="left:1077.20px;top:505.82px;font-size:12.5px;color:#6f6f6f;-webkit-text-stroke:.25px #6f6f6f;transform-origin:0 0;transform:scaleX(0.9608);">4 Mi</span>
<span class="t" style="left:1107.90px;top:500.92px;font-size:12.5px;color:#6f6f6f;-webkit-text-stroke:.25px #6f6f6f;transform-origin:0 0;transform:scaleX(0.9608);">5 Mi</span>
<span class="t" style="left:1138.80px;top:496.82px;font-size:12.5px;color:#6f6f6f;-webkit-text-stroke:.25px #6f6f6f;transform-origin:0 0;transform:scaleX(0.9608);">6 Mi</span>
<span class="t" style="left:1169.50px;top:526.12px;font-size:12.5px;color:#6f6f6f;-webkit-text-stroke:.25px #6f6f6f;transform-origin:0 0;transform:scaleX(0.9608);">5 Mi</span>
<span class="t" style="left:1200.50px;top:495.92px;font-size:12.5px;color:#6f6f6f;-webkit-text-stroke:.25px #6f6f6f;transform-origin:0 0;transform:scaleX(0.9608);">6 Mi</span>
<span class="t" style="left:1262.10px;top:513.82px;font-size:12.5px;color:#6f6f6f;-webkit-text-stroke:.25px #6f6f6f;transform-origin:0 0;transform:scaleX(0.9608);">7 Mi</span>
<span class="t" style="left:1228.40px;top:479.52px;font-size:12.5px;color:#6f6f6f;-webkit-text-stroke:.25px #6f6f6f;transform-origin:0 0;transform:scaleX(0.9124);">12 Mi</span>
<span class="t" style="left:890.80px;top:554.44px;font-size:12px;color:#6f6f6f;-webkit-text-stroke:.25px #6f6f6f;transform-origin:42.70px 10.16px;transform:rotate(-35.5deg) scaleX(1.0304);">January</span>
<span class="t" style="left:916.29px;top:554.44px;font-size:12px;color:#6f6f6f;-webkit-text-stroke:.25px #6f6f6f;transform-origin:48.03px 10.16px;transform:rotate(-35.5deg) scaleX(1.0306);">February</span>
<span class="t" style="left:961.80px;top:554.44px;font-size:12px;color:#6f6f6f;-webkit-text-stroke:.25px #6f6f6f;transform-origin:33.34px 10.16px;transform:rotate(-35.5deg) scaleX(1.0647);">March</span>
<span class="t" style="left:1001.94px;top:554.44px;font-size:12px;color:#6f6f6f;-webkit-text-stroke:.25px #6f6f6f;transform-origin:24.02px 10.16px;transform:rotate(-35.5deg) scaleX(1.1034);">April</span>
<span class="t" style="left:1034.11px;top:554.44px;font-size:12px;color:#6f6f6f;-webkit-text-stroke:.25px #6f6f6f;transform-origin:22.67px 10.16px;transform:rotate(-35.5deg) scaleX(1.1247);">May</span>
<span class="t" style="left:1061.57px;top:554.44px;font-size:12px;color:#6f6f6f;-webkit-text-stroke:.25px #6f6f6f;transform-origin:26.03px 10.16px;transform:rotate(-35.5deg) scaleX(1.0180);">June</span>
<span class="t" style="left:1097.08px;top:554.44px;font-size:12px;color:#6f6f6f;-webkit-text-stroke:.25px #6f6f6f;transform-origin:21.34px 10.16px;transform:rotate(-35.5deg) scaleX(1.0073);">July</span>
<span class="t" style="left:1111.88px;top:554.44px;font-size:12px;color:#6f6f6f;-webkit-text-stroke:.25px #6f6f6f;transform-origin:37.36px 10.16px;transform:rotate(-35.5deg) scaleX(1.0305);">August</span>
<span class="t" style="left:1121.36px;top:554.44px;font-size:12px;color:#6f6f6f;-webkit-text-stroke:.25px #6f6f6f;transform-origin:58.70px 10.16px;transform:rotate(-35.5deg) scaleX(1.0136);">September</span>
<span class="t" style="left:1168.19px;top:554.44px;font-size:12px;color:#6f6f6f;-webkit-text-stroke:.25px #6f6f6f;transform-origin:42.69px 10.16px;transform:rotate(-35.5deg) scaleX(1.0190);">October</span>
<span class="t" style="left:1186.34px;top:554.44px;font-size:12px;color:#6f6f6f;-webkit-text-stroke:.25px #6f6f6f;transform-origin:55.36px 10.16px;transform:rotate(-35.5deg) scaleX(1.0206);">November</span>
<span class="t" style="left:1217.16px;top:554.44px;font-size:12px;color:#6f6f6f;-webkit-text-stroke:.25px #6f6f6f;transform-origin:55.36px 10.16px;transform:rotate(-35.5deg) scaleX(1.0025);">December</span>
<!-- sec_table -->
<div class="card" style="left:342px;top:627px;width:951.5px;height:257.5px"></div>
<span class="t" style="left:729.75px;top:634.57px;font-size:13.5px;color:#1c1c1c;transform-origin:0 0;transform:scaleX(0.9077);">VALORES POR PARTICIPANTE</span>
<div class="abs" style="left:352px;top:704.8px;width:899px;height:19.4px;background:#eeeeee"></div>
<div class="abs" style="left:352px;top:744.2px;width:899px;height:19.3px;background:#eeeeee"></div>
<div class="abs" style="left:352px;top:783.5px;width:899px;height:19.7px;background:#eeeeee"></div>
<div class="abs" style="left:352px;top:822.6px;width:899px;height:19.8px;background:#eeeeee"></div>
<div class="abs" style="left:468px;top:655px;width:1px;height:222px;background:#e7e7e7"></div>
<div class="abs" style="left:763.6px;top:655px;width:1px;height:222px;background:#e7e7e7"></div>
<div class="abs" style="left:924.4px;top:655px;width:1px;height:222px;background:#e7e7e7"></div>
<div class="abs" style="left:1022.6px;top:655px;width:1px;height:222px;background:#e7e7e7"></div>
<div class="abs" style="left:1141px;top:655px;width:1px;height:222px;background:#e7e7e7"></div>
<div class="abs" style="left:352px;top:683px;width:899px;height:2px;background:#55cbbd"></div>
<div class="abs" style="left:352px;top:857.4px;width:899px;height:1.3px;background:#17b09d"></div>
<span class="t" style="left:395.00px;top:659.64px;font-size:13.3px;color:#3a3a3a;transform-origin:0 0;transform:scaleX(0.8695);">CNPJ</span>
<span class="t" style="left:560.00px;top:659.64px;font-size:13.3px;color:#3a3a3a;transform-origin:0 0;transform:scaleX(1.0330);">Nome Participante</span>
<span class="t" style="left:791.30px;top:659.64px;font-size:13.3px;color:#3a3a3a;transform-origin:0 0;transform:scaleX(1.0320);">Total Operacional</span>
<span class="t" style="left:932.10px;top:659.64px;font-size:13.3px;color:#3a3a3a;transform-origin:0 0;transform:scaleX(1.0058);">Total de ICMS</span>
<span class="t" style="left:1030.30px;top:659.64px;font-size:13.3px;color:#3a3a3a;transform-origin:0 0;transform:scaleX(0.9949);">Total de ICMS-ST</span>
<span class="t" style="left:1163.30px;top:659.64px;font-size:13.3px;color:#3a3a3a;">Total de IPI</span>
<svg class="abs" style="left:770.5px;top:675.5px" width="9" height="6" viewBox="0 0 9 6"><path d="M0.4 0.6H8.6L4.5 5.2Z" fill="#222"/></svg>
<span class="t" style="left:358.10px;top:690.14px;font-size:12px;color:#3a3a3a;transform-origin:0 0;transform:scaleX(0.9900);">99999999999999</span>
<span class="t" style="left:474.90px;top:690.14px;font-size:12px;color:#3a3a3a;transform-origin:0 0;transform:scaleX(0.9322);">PARTICIPANTE Z8569</span>
<span class="t" style="left:849.50px;top:690.14px;font-size:12px;color:#3a3a3a;transform-origin:0 0;transform:scaleX(0.9761);">5.762.627,08</span>
<span class="t" style="left:957.30px;top:690.14px;font-size:12px;color:#3a3a3a;transform-origin:0 0;transform:scaleX(0.9790);">509.299,02</span>
<span class="t" style="left:1111.90px;top:690.14px;font-size:12px;color:#3a3a3a;transform-origin:0 0;transform:scaleX(0.9761);">0,00</span>
<span class="t" style="left:1221.90px;top:690.14px;font-size:12px;color:#3a3a3a;transform-origin:0 0;transform:scaleX(0.9761);">0,00</span>
<span class="t" style="left:358.10px;top:709.44px;font-size:12px;color:#3a3a3a;transform-origin:0 0;transform:scaleX(0.9900);">09138393000179</span>
<span class="t" style="left:474.90px;top:709.44px;font-size:12px;color:#3a3a3a;transform-origin:0 0;transform:scaleX(0.9322);">PARTICIPANTE Z8569</span>
<span class="t" style="left:849.50px;top:709.44px;font-size:12px;color:#3a3a3a;transform-origin:0 0;transform:scaleX(0.9761);">4.472.893,23</span>
<span class="t" style="left:957.30px;top:709.44px;font-size:12px;color:#3a3a3a;transform-origin:0 0;transform:scaleX(0.9790);">375.657,79</span>
<span class="t" style="left:1111.90px;top:709.44px;font-size:12px;color:#3a3a3a;transform-origin:0 0;transform:scaleX(0.9761);">0,00</span>
<span class="t" style="left:1221.90px;top:709.44px;font-size:12px;color:#3a3a3a;transform-origin:0 0;transform:scaleX(0.9761);">0,00</span>
<span class="t" style="left:358.10px;top:729.24px;font-size:12px;color:#3a3a3a;transform-origin:0 0;transform:scaleX(0.9900);">99999999999999</span>
<span class="t" style="left:474.90px;top:729.24px;font-size:12px;color:#3a3a3a;transform-origin:0 0;transform:scaleX(0.9322);">PARTICIPANTE Z7776</span>
<span class="t" style="left:849.50px;top:729.24px;font-size:12px;color:#3a3a3a;transform-origin:0 0;transform:scaleX(0.9761);">4.073.327,39</span>
<span class="t" style="left:963.90px;top:729.24px;font-size:12px;color:#3a3a3a;transform-origin:0 0;transform:scaleX(0.9777);">33.840,20</span>
<span class="t" style="left:1111.90px;top:729.24px;font-size:12px;color:#3a3a3a;transform-origin:0 0;transform:scaleX(0.9761);">0,00</span>
<span class="t" style="left:1221.90px;top:729.24px;font-size:12px;color:#3a3a3a;transform-origin:0 0;transform:scaleX(0.9761);">0,00</span>
<span class="t" style="left:358.10px;top:748.44px;font-size:12px;color:#3a3a3a;transform-origin:0 0;transform:scaleX(0.9900);">99999999999999</span>
<span class="t" style="left:474.90px;top:748.44px;font-size:12px;color:#3a3a3a;transform-origin:0 0;transform:scaleX(0.9322);">PARTICIPANTE Z8782</span>
<span class="t" style="left:849.50px;top:748.44px;font-size:12px;color:#3a3a3a;transform-origin:0 0;transform:scaleX(0.9761);">3.595.131,83</span>
<span class="t" style="left:980.10px;top:748.44px;font-size:12px;color:#3a3a3a;transform-origin:0 0;transform:scaleX(0.9808);">557,44</span>
<span class="t" style="left:1111.90px;top:748.44px;font-size:12px;color:#3a3a3a;transform-origin:0 0;transform:scaleX(0.9761);">0,00</span>
<span class="t" style="left:1221.90px;top:748.44px;font-size:12px;color:#3a3a3a;transform-origin:0 0;transform:scaleX(0.9761);">0,00</span>
<span class="t" style="left:358.10px;top:769.14px;font-size:12px;color:#3a3a3a;">61074829001103</span>
<span class="t" style="left:474.90px;top:769.14px;font-size:12px;color:#3a3a3a;transform-origin:0 0;transform:scaleX(0.9322);">PARTICIPANTE Z8782</span>
<span class="t" style="left:849.50px;top:769.14px;font-size:12px;color:#3a3a3a;transform-origin:0 0;transform:scaleX(0.9761);">2.995.233,86</span>
<span class="t" style="left:963.90px;top:769.14px;font-size:12px;color:#3a3a3a;transform-origin:0 0;transform:scaleX(0.9777);">40.597,34</span>
<span class="t" style="left:1111.90px;top:769.14px;font-size:12px;color:#3a3a3a;transform-origin:0 0;transform:scaleX(0.9761);">0,00</span>
<span class="t" style="left:1221.90px;top:769.14px;font-size:12px;color:#3a3a3a;transform-origin:0 0;transform:scaleX(0.9761);">0,00</span>
<span class="t" style="left:358.10px;top:788.34px;font-size:12px;color:#3a3a3a;transform-origin:0 0;transform:scaleX(0.9900);">59104422005704</span>
<span class="t" style="left:474.90px;top:788.34px;font-size:12px;color:#3a3a3a;transform-origin:0 0;transform:scaleX(0.9322);">PARTICIPANTE Z7778</span>
<span class="t" style="left:849.50px;top:788.34px;font-size:12px;color:#3a3a3a;transform-origin:0 0;transform:scaleX(0.9761);">2.938.862,82</span>
<span class="t" style="left:957.30px;top:788.34px;font-size:12px;color:#3a3a3a;transform-origin:0 0;transform:scaleX(0.9790);">260.858,14</span>
<span class="t" style="left:1111.90px;top:788.34px;font-size:12px;color:#3a3a3a;transform-origin:0 0;transform:scaleX(0.9761);">0,00</span>
<span class="t" style="left:1221.90px;top:788.34px;font-size:12px;color:#3a3a3a;transform-origin:0 0;transform:scaleX(0.9761);">0,00</span>
<span class="t" style="left:474.90px;top:808.44px;font-size:12px;color:#3a3a3a;transform-origin:0 0;transform:scaleX(0.9322);">PARTICIPANTE Z7564</span>
<span class="t" style="left:849.50px;top:808.44px;font-size:12px;color:#3a3a3a;transform-origin:0 0;transform:scaleX(0.9761);">2.915.010,99</span>
<span class="t" style="left:993.30px;top:808.44px;font-size:12px;color:#3a3a3a;transform-origin:0 0;transform:scaleX(0.9761);">0,00</span>
<span class="t" style="left:1111.90px;top:808.44px;font-size:12px;color:#3a3a3a;transform-origin:0 0;transform:scaleX(0.9761);">0,00</span>
<span class="t" style="left:1221.90px;top:808.44px;font-size:12px;color:#3a3a3a;transform-origin:0 0;transform:scaleX(0.9761);">0,00</span>
<span class="t" style="left:358.10px;top:827.34px;font-size:12px;color:#3a3a3a;transform-origin:0 0;transform:scaleX(0.9900);">99999999999999</span>
<span class="t" style="left:474.90px;top:827.34px;font-size:12px;color:#3a3a3a;transform-origin:0 0;transform:scaleX(0.9322);">PARTICIPANTE Z7778</span>
<span class="t" style="left:849.50px;top:827.34px;font-size:12px;color:#3a3a3a;transform-origin:0 0;transform:scaleX(0.9761);">2.500.935,91</span>
<span class="t" style="left:957.30px;top:827.34px;font-size:12px;color:#3a3a3a;transform-origin:0 0;transform:scaleX(0.9790);">215.509,20</span>
<span class="t" style="left:1111.90px;top:827.34px;font-size:12px;color:#3a3a3a;transform-origin:0 0;transform:scaleX(0.9761);">0,00</span>
<span class="t" style="left:1221.90px;top:827.34px;font-size:12px;color:#3a3a3a;transform-origin:0 0;transform:scaleX(0.9761);">0,00</span>
<div class="abs" style="left:352px;top:842px;width:899px;height:15.4px;overflow:hidden"><div class="abs" style="left:-352px;top:-842px;width:1918px;height:913px"><span class="t" style="left:358.10px;top:848.34px;font-size:12px;color:#3a3a3a;transform-origin:0 0;transform:scaleX(0.9900);">99999999999999</span><span class="t" style="left:474.90px;top:848.34px;font-size:12px;color:#3a3a3a;transform-origin:0 0;transform:scaleX(0.9322);">PARTICIPANTE Z7564</span><span class="t" style="left:849.50px;top:848.34px;font-size:12px;color:#3a3a3a;transform-origin:0 0;transform:scaleX(0.9761);">2.385.021,08</span><span class="t" style="left:993.30px;top:848.34px;font-size:12px;color:#3a3a3a;transform-origin:0 0;transform:scaleX(0.9761);">0,00</span><span class="t" style="left:1111.90px;top:848.34px;font-size:12px;color:#3a3a3a;transform-origin:0 0;transform:scaleX(0.9761);">0,00</span><span class="t" style="left:1221.90px;top:848.34px;font-size:12px;color:#3a3a3a;transform-origin:0 0;transform:scaleX(0.9761);">0,00</span></div></div>
<span class="t" style="left:358.10px;top:864.14px;font-size:12px;color:#252525;font-weight:bold;transform-origin:0 0;transform:scaleX(1.0259);">Total</span>
<span class="t" style="left:839.00px;top:864.14px;font-size:12px;color:#252525;font-weight:bold;transform-origin:0 0;transform:scaleX(1.0280);">67.630.085,02</span>
<span class="t" style="left:944.10px;top:864.14px;font-size:12px;color:#252525;font-weight:bold;transform-origin:0 0;transform:scaleX(1.0274);">2.885.143,59</span>
<span class="t" style="left:1110.70px;top:864.14px;font-size:12px;color:#252525;font-weight:bold;transform-origin:0 0;transform:scaleX(1.0274);">0,00</span>
<span class="t" style="left:1196.70px;top:864.14px;font-size:12px;color:#252525;font-weight:bold;transform-origin:0 0;transform:scaleX(1.0274);">9.172,38</span>
<div class="abs" style="left:1276.5px;top:655.5px;width:7.5px;height:10px;border-radius:3.5px;background:#9a9a9a"></div>
<!-- sec_map -->
<div class="card" style="left:1308.5px;top:385px;width:385.5px;height:499.3px"></div>
<span class="t" style="left:1413.00px;top:391.37px;font-size:13.5px;color:#1c1c1c;transform-origin:0 0;transform:scaleX(0.9183);">VALORES POR LOCALIZAÇÃO</span>
<svg class="abs" style="left:1318px;top:412px" width="369" height="464.6" viewBox="1318 412 369 464.6"><defs><linearGradient id="and" x1="0" x2="1"><stop offset="0" stop-color="#d9d8d2" stop-opacity="0"/><stop offset=".5" stop-color="#c9c8c2" stop-opacity=".55"/><stop offset="1" stop-color="#d9d8d2" stop-opacity="0"/></linearGradient><filter id="nz" x="0" y="0" width="100%" height="100%"><feTurbulence type="fractalNoise" baseFrequency="0.11" numOctaves="3" seed="7"/><feColorMatrix values="0 0 0 0 0.62  0 0 0 0 0.62  0 0 0 0 0.6  1.6 0 0 0 -0.55"/></filter><filter id="bl" x="-20%" y="-20%" width="140%" height="140%"><feGaussianBlur stdDeviation="3.5"/></filter><mask id="am" maskUnits="userSpaceOnUse" x="1318" y="412" width="370" height="465"><g filter="url(#bl)" fill="none" stroke="#fff" stroke-linejoin="round" stroke-linecap="round"><polyline points="1322,472 1332,500 1326,540 1332,575 1344,605 1360,630 1374,655 1380,690 1372,725 1366,760 1362,800 1357,840 1354,880" stroke-width="17"/><polyline points="1340,466 1362,474 1390,470 1412,472" stroke-width="8" stroke="#aaa"/><polyline points="1395,512 1412,520 1430,512" stroke-width="10" stroke="#888"/><polyline points="1548,640 1556,665 1545,685 1520,700 1500,715" stroke-width="9" stroke="#777"/></g></mask><clipPath id="lc"><polygon points="1318.0,474.2 1325.8,468.1 1332.8,463.7 1338.9,461.1 1347.7,460.7 1353.8,455.8 1360.8,453.2 1360.0,457.6 1355.9,462.8 1357.3,469.0 1361.7,465.5 1363.5,461.1 1373.1,460.2 1383.6,464.6 1394.1,465.5 1404.7,465.5 1415.2,464.6 1423.9,468.1 1430.9,474.2 1438.8,479.5 1448.5,486.5 1459.0,492.6 1471.3,497.0 1483.5,499.7 1492.3,505.8 1498.4,517.2 1502.8,527.7 1509.6,537.2 1523.8,542.7 1536.9,551.5 1552.3,550.4 1567.6,552.6 1582.9,559.1 1596.0,569.0 1601.5,581.0 1599.3,594.2 1591.7,605.1 1582.9,613.9 1576.3,622.6 1574.6,635.8 1573.1,648.9 1569.8,662.0 1565.4,675.2 1556.6,686.1 1543.5,692.7 1530.4,698.2 1529.0,701.9 1511.4,710.7 1508.2,723.8 1502.7,739.1 1493.9,750.1 1485.2,761.0 1480.8,769.8 1472.0,776.3 1461.1,778.5 1452.3,776.3 1450.1,782.9 1456.7,791.7 1454.5,802.6 1441.4,809.2 1423.9,812.5 1419.5,822.3 1417.3,831.1 1404.2,831.1 1402.0,839.8 1406.3,846.4 1399.8,853.0 1395.4,863.9 1388.8,876.6 1338.5,876.6 1342.8,850.8 1345.0,833.3 1346.1,815.8 1351.6,798.2 1357.1,778.5 1359.3,756.6 1361.5,734.7 1364.7,708.5 1368.0,690.9 1368.7,673.2 1366.1,657.4 1352.1,648.7 1338.0,638.2 1327.5,624.1 1318.0,607.5 1318.0,493.0 1320.6,488.0 1321.0,481.0 1319.2,476.0"/></clipPath></defs><rect x="1318" y="412" width="370" height="465" fill="#abc7f2"/><polygon points="1318.0,474.2 1325.8,468.1 1332.8,463.7 1338.9,461.1 1347.7,460.7 1353.8,455.8 1360.8,453.2 1360.0,457.6 1355.9,462.8 1357.3,469.0 1361.7,465.5 1363.5,461.1 1373.1,460.2 1383.6,464.6 1394.1,465.5 1404.7,465.5 1415.2,464.6 1423.9,468.1 1430.9,474.2 1438.8,479.5 1448.5,486.5 1459.0,492.6 1471.3,497.0 1483.5,499.7 1492.3,505.8 1498.4,517.2 1502.8,527.7 1509.6,537.2 1523.8,542.7 1536.9,551.5 1552.3,550.4 1567.6,552.6 1582.9,559.1 1596.0,569.0 1601.5,581.0 1599.3,594.2 1591.7,605.1 1582.9,613.9 1576.3,622.6 1574.6,635.8 1573.1,648.9 1569.8,662.0 1565.4,675.2 1556.6,686.1 1543.5,692.7 1530.4,698.2 1529.0,701.9 1511.4,710.7 1508.2,723.8 1502.7,739.1 1493.9,750.1 1485.2,761.0 1480.8,769.8 1472.0,776.3 1461.1,778.5 1452.3,776.3 1450.1,782.9 1456.7,791.7 1454.5,802.6 1441.4,809.2 1423.9,812.5 1419.5,822.3 1417.3,831.1 1404.2,831.1 1402.0,839.8 1406.3,846.4 1399.8,853.0 1395.4,863.9 1388.8,876.6 1338.5,876.6 1342.8,850.8 1345.0,833.3 1346.1,815.8 1351.6,798.2 1357.1,778.5 1359.3,756.6 1361.5,734.7 1364.7,708.5 1368.0,690.9 1368.7,673.2 1366.1,657.4 1352.1,648.7 1338.0,638.2 1327.5,624.1 1318.0,607.5 1318.0,493.0 1320.6,488.0 1321.0,481.0 1319.2,476.0" fill="#f1f0eb" stroke="#c9d9f3" stroke-width="2.2" stroke-linejoin="round"/><polygon points="1318.0,474.2 1325.8,468.1 1332.8,463.7 1338.9,461.1 1347.7,460.7 1353.8,455.8 1360.8,453.2 1360.0,457.6 1355.9,462.8 1357.3,469.0 1361.7,465.5 1363.5,461.1 1373.1,460.2 1383.6,464.6 1394.1,465.5 1404.7,465.5 1415.2,464.6 1423.9,468.1 1430.9,474.2 1438.8,479.5 1448.5,486.5 1459.0,492.6 1471.3,497.0 1483.5,499.7 1492.3,505.8 1498.4,517.2 1502.8,527.7 1509.6,537.2 1523.8,542.7 1536.9,551.5 1552.3,550.4 1567.6,552.6 1582.9,559.1 1596.0,569.0 1601.5,581.0 1599.3,594.2 1591.7,605.1 1582.9,613.9 1576.3,622.6 1574.6,635.8 1573.1,648.9 1569.8,662.0 1565.4,675.2 1556.6,686.1 1543.5,692.7 1530.4,698.2 1529.0,701.9 1511.4,710.7 1508.2,723.8 1502.7,739.1 1493.9,750.1 1485.2,761.0 1480.8,769.8 1472.0,776.3 1461.1,778.5 1452.3,776.3 1450.1,782.9 1456.7,791.7 1454.5,802.6 1441.4,809.2 1423.9,812.5 1419.5,822.3 1417.3,831.1 1404.2,831.1 1402.0,839.8 1406.3,846.4 1399.8,853.0 1395.4,863.9 1388.8,876.6 1338.5,876.6 1342.8,850.8 1345.0,833.3 1346.1,815.8 1351.6,798.2 1357.1,778.5 1359.3,756.6 1361.5,734.7 1364.7,708.5 1368.0,690.9 1368.7,673.2 1366.1,657.4 1352.1,648.7 1338.0,638.2 1327.5,624.1 1318.0,607.5 1318.0,493.0 1320.6,488.0 1321.0,481.0 1319.2,476.0" fill="#f1f0eb"/><g clip-path="url(#lc)"><rect x="1318" y="412" width="370" height="465" filter="url(#nz)" mask="url(#am)"/></g><g fill="none" stroke="#b9b9b6" stroke-width=".9" stroke-dasharray="3 2" opacity=".8"><polyline points="1468.0,535.0 1478.0,560.0 1472.0,590.0 1452.0,598.0 1432.0,597.0 1420.0,604.0"/><polyline points="1472.0,590.0 1490.0,592.0 1505.0,588.0 1520.0,596.0 1531.0,590.0"/><polyline points="1509.0,545.0 1512.0,565.0 1520.0,580.0 1531.0,590.0 1540.0,575.0 1548.0,560.0 1545.0,552.0"/><polyline points="1548.0,560.0 1560.0,570.0 1575.0,578.0 1590.0,583.0"/><polyline points="1531.0,590.0 1538.0,610.0 1530.0,625.0 1545.0,640.0 1560.0,636.0 1574.0,640.0"/><polyline points="1478.0,600.0 1482.0,625.0 1478.0,645.0 1492.0,652.0 1510.0,650.0 1525.0,660.0"/><polyline points="1530.0,625.0 1512.0,628.0 1500.0,640.0 1492.0,652.0"/><polyline points="1448.5,669.7 1462.0,668.0 1478.0,672.0 1490.0,665.0 1492.0,652.0"/><polyline points="1490.0,665.0 1505.0,672.0 1520.0,668.0 1540.0,672.0 1555.0,665.0"/><polyline points="1478.6,693.0 1490.0,688.0 1500.0,700.0 1515.0,698.0"/><polyline points="1476.4,701.9 1490.0,712.0 1505.0,715.0"/><polyline points="1560.0,570.0 1562.0,590.0 1575.0,600.0 1588.0,604.0"/><polyline points="1575.0,578.0 1580.0,590.0 1595.0,594.0"/></g><g fill="none" stroke="#939390" stroke-width="1.5" stroke-linejoin="round"><polyline points="1355.9,463.7 1351.2,472.5 1353.5,484.8 1362.6,488.3 1371.4,489.1 1384.5,491.8 1387.1,500.5 1385.7,510.2 1387.1,518.9"/><polyline points="1387.1,518.9 1392.4,526.8 1399.4,529.5 1407.3,526.0 1413.4,518.9 1408.2,511.9 1407.3,506.7 1418.7,505.8 1430.9,500.5 1436.2,499.6"/><polyline points="1436.2,499.6 1432.7,492.6 1430.9,485.6 1432.7,478.6"/><polyline points="1436.2,499.6 1439.7,510.2 1438.0,518.9 1443.2,526.0 1450.2,520.7 1459.0,518.9 1462.5,517.2"/><polyline points="1450.2,520.7 1448.5,510.2 1452.0,503.0 1459.0,493.0"/><polyline points="1462.5,517.2 1473.0,512.0 1473.9,499.6 1474.8,496.1"/><polyline points="1462.5,517.2 1474.8,520.7 1485.3,517.2 1490.5,513.7 1492.3,506.7"/><polyline points="1387.1,518.9 1380.1,527.7 1371.4,531.2 1369.6,545.2 1367.8,557.5 1353.8,566.3 1345.0,582.0 1352.0,596.0 1364.3,599.6 1366.0,606.6 1387.0,601.3 1399.4,598.7"/><polyline points="1318.0,530.3 1334.5,534.7 1342.4,543.5 1350.3,552.0 1353.8,566.3"/><polyline points="1318.0,562.0 1328.0,558.0 1338.0,550.0 1342.4,543.5"/><polyline points="1399.4,598.7 1401.1,610.1 1408.2,617.1 1422.2,620.6 1430.9,625.9 1434.5,641.7 1445.0,642.5 1450.2,655.7 1448.5,669.7"/><polyline points="1374.0,606.6 1377.5,624.0 1374.9,638.0 1371.4,652.0 1378.4,666.2 1383.6,689.0"/><polyline points="1383.6,689.0 1394.1,683.7 1408.2,685.5 1418.7,680.2 1423.9,666.2 1443.2,664.5 1448.5,669.7"/><polyline points="1448.5,669.7 1450.2,680.2 1462.5,685.5 1470.0,690.0 1478.6,693.0 1476.4,701.9 1474.2,712.8"/><polyline points="1418.7,680.2 1434.8,697.5 1450.2,704.0 1445.8,719.4 1463.3,721.6 1474.2,712.8"/><polyline points="1474.2,712.8 1463.3,728.2 1452.3,743.5 1448.0,756.6 1450.1,767.6 1452.3,776.3"/><polyline points="1452.3,743.5 1463.3,745.7 1476.4,758.8 1483.0,765.4"/><polyline points="1383.6,689.0 1382.0,680.0 1380.0,702.0 1371.3,723.8 1367.0,745.7 1368.0,767.6 1362.6,789.5 1360.4,811.4 1357.0,833.3 1356.0,855.2 1357.0,876.6"/></g><ellipse cx="1417" cy="745" rx="4.2" ry="2.8" fill="#b4cbf0"/><ellipse cx="1436.4" cy="542" rx="2.6" ry="3.2" fill="#c4d4f0"/><ellipse cx="1552" cy="597" rx="4" ry="1.8" fill="#c4d4f0"/><ellipse cx="1358.5" cy="466" rx="2.6" ry="4" fill="#abc7f2"/><ellipse cx="1374" cy="635" rx="2" ry="3" fill="#b8c4ea"/><path d="M1318 412H1330L1326 415L1318 417Z" fill="#e9ebee"/><ellipse cx="1372" cy="413" rx="6" ry="1.5" fill="#e3e8f0"/></svg>
<span class="t" style="left:1374.90px;top:412.81px;font-size:10.5px;color:#2a2a2a;font-weight:bold;transform-origin:0 0;transform:scaleX(1.0250);text-shadow:0 0 2px #fff,0 0 2px #fff,0 0 1px #fff;">(EUA)</span>
<span class="t" style="left:1325.00px;top:432.47px;font-size:11.5px;color:#5a78b4;transform-origin:0 0;transform:scaleX(1.0088);letter-spacing:.8px;">Mar do Caribe</span>
<span class="t" style="left:1354.70px;top:472.87px;font-size:11.5px;color:#1e1e1e;font-weight:bold;transform-origin:0 0;transform:scaleX(0.9255);letter-spacing:1px;text-shadow:0 0 2px #fff,0 0 2px #fff,0 0 1px #fff;">VENEZUELA</span>
<span class="t" style="left:1416.70px;top:489.37px;font-size:11.5px;color:#1e1e1e;font-weight:bold;transform-origin:0 0;transform:scaleX(0.9265);letter-spacing:1px;text-shadow:0 0 2px #fff,0 0 2px #fff,0 0 1px #fff;">GUIANA</span>
<span class="t" style="left:1318.00px;top:503.07px;font-size:11.5px;color:#1e1e1e;font-weight:bold;transform-origin:0 0;transform:scaleX(0.9545);letter-spacing:1px;text-shadow:0 0 2px #fff,0 0 2px #fff,0 0 1px #fff;">COLÔMBIA</span>
<span class="t" style="left:1429.50px;top:505.67px;font-size:11.5px;color:#1e1e1e;font-weight:bold;transform-origin:0 0;transform:scaleX(0.9042);letter-spacing:1px;text-shadow:0 0 2px #fff,0 0 2px #fff,0 0 1px #fff;">SURINAME</span>
<span class="t" style="left:1318.00px;top:537.77px;font-size:11.5px;color:#1e1e1e;font-weight:bold;transform-origin:0 0;transform:scaleX(0.8675);letter-spacing:1px;text-shadow:0 0 2px #fff,0 0 2px #fff,0 0 1px #fff;">OR</span>
<span class="t" style="left:1446.60px;top:580.88px;font-size:15.5px;color:#1e1e1e;font-weight:bold;transform-origin:0 0;transform:scaleX(0.8620);letter-spacing:1.5px;text-shadow:0 0 2px #fff,0 0 2px #fff,0 0 1px #fff;">BRASIL</span>
<span class="t" style="left:1318.00px;top:597.57px;font-size:11.5px;color:#1e1e1e;font-weight:bold;transform-origin:0 0;transform:scaleX(0.8845);letter-spacing:1px;text-shadow:0 0 2px #fff,0 0 2px #fff,0 0 1px #fff;">PERU</span>
<span class="t" style="left:1382.00px;top:642.67px;font-size:11.5px;color:#1e1e1e;font-weight:bold;transform-origin:0 0;transform:scaleX(0.9545);letter-spacing:1px;text-shadow:0 0 2px #fff,0 0 2px #fff,0 0 1px #fff;">BOLÍVIA</span>
<span class="t" style="left:1418.10px;top:689.07px;font-size:11.5px;color:#1e1e1e;font-weight:bold;transform-origin:0 0;transform:scaleX(0.8951);letter-spacing:1px;text-shadow:0 0 2px #fff,0 0 2px #fff,0 0 1px #fff;">PARAGUAI</span>
<span class="t" style="left:1348.40px;top:711.77px;font-size:11.5px;color:#1e1e1e;font-weight:bold;transform-origin:0 0;transform:scaleX(0.9165);letter-spacing:1px;text-shadow:0 0 2px #fff,0 0 2px #fff,0 0 1px #fff;">CHILE</span>
<span class="t" style="left:1433.80px;top:765.07px;font-size:11.5px;color:#1e1e1e;font-weight:bold;transform-origin:0 0;transform:scaleX(0.8917);letter-spacing:1px;text-shadow:0 0 2px #fff,0 0 2px #fff,0 0 1px #fff;">URUGUAI</span>
<span class="t" style="left:1372.00px;top:781.27px;font-size:11.5px;color:#1e1e1e;font-weight:bold;transform-origin:0 0;transform:scaleX(0.9719);letter-spacing:1px;text-shadow:0 0 2px #fff,0 0 2px #fff,0 0 1px #fff;">ARGENTINA</span>
<svg class="abs" style="left:1318px;top:412px" width="369" height="464.6" viewBox="1318 412 369 464.6"><g fill="#1a4fd8" fill-opacity=".68" stroke="#0a22b8" stroke-width="1.1"><circle cx="1414.4" cy="560.8" r="6.3"/><circle cx="1503" cy="554.5" r="6.8"/><circle cx="1535.2" cy="562.8" r="6.8"/><circle cx="1570.7" cy="567.6" r="6.8"/><circle cx="1590.1" cy="574.4" r="6.3"/><circle cx="1589.8" cy="589.3" r="9.4"/><circle cx="1513.5" cy="596.4" r="6"/><circle cx="1564.8" cy="620.6" r="7.7"/><circle cx="1465.1" cy="625.4" r="8"/><circle cx="1505.3" cy="643.1" r="7"/><circle cx="1540.6" cy="666.7" r="13.1"/><circle cx="1562.2" cy="668.7" r="6"/><circle cx="1549.1" cy="685.8" r="7"/><circle cx="1510.7" cy="684.7" r="20"/><circle cx="1472.2" cy="678.1" r="6.5"/><circle cx="1489.3" cy="700.6" r="14.5"/><circle cx="1497" cy="722" r="7.2"/><circle cx="1484.5" cy="734.5" r="7.5"/></g></svg>
<span class="t" style="left:1400.20px;top:847.33px;font-size:10px;color:#111;transform-origin:0 0;transform:scaleX(1.0426);text-shadow:0 0 2px #fff,0 0 2px #fff,0 0 2px #fff;">© 2026 TomTom, © 2026 Microsoft Corporation,</span>
<span class="t" style="left:1629.70px;top:847.33px;font-size:10px;color:#3a4aa8;transform-origin:0 0;transform:scaleX(1.0355);text-decoration:underline;text-shadow:0 0 2px #fff,0 0 2px #fff,0 0 2px #fff;">Terms</span>
<span class="t" style="left:1536.90px;top:858.43px;font-size:10px;color:#3a4aa8;transform-origin:0 0;transform:scaleX(1.0502);text-decoration:underline;text-shadow:0 0 2px #fff,0 0 2px #fff,0 0 2px #fff;">© OpenStreetMap</span>
<div class="abs" style="left:1318px;top:850px;width:82px;height:19px;background:rgba(255,255,255,.32)"></div>
<svg class="abs" style="left:1323.3px;top:854.3px" width="11.4" height="11.4" viewBox="0 0 11.4 11.4"><rect width="5.3" height="5.3" fill="#f25022"/><rect x="6.1" width="5.3" height="5.3" fill="#7fba00"/><rect y="6.1" width="5.3" height="5.3" fill="#00a4ef"/><rect x="6.1" y="6.1" width="5.3" height="5.3" fill="#ffb900"/></svg>
<span class="t" style="left:1337.60px;top:854.61px;font-size:10.5px;color:#767676;transform-origin:0 0;transform:scaleX(0.8778);">Microsoft Bing</span>
</div></div>
<div class="abs" style="left:0;top:0;width:80px;height:913px;background:#f3f4f9"></div>
<div class="abs" style="left:0;top:202px;width:80px;height:50px;background:#fff"></div>
<div class="abs" style="left:0;top:202px;width:10px;height:50px;background:#3b6fdc"></div>
<svg class="abs" style="left:30.0px;top:5.5px" width="24" height="24" viewBox="0 0 24 24" fill="none" stroke="#55565c" stroke-width="1.8" stroke-linecap="round" stroke-linejoin="round"><path d="M3.5 11 L12 3.2 L20.5 11 V20.8 H14.6 V14.2 H9.4 V20.8 H3.5 Z"/></svg>
<svg class="abs" style="left:31.0px;top:165.0px" width="22" height="24" viewBox="0 0 22 24" fill="none" stroke="#55565c" stroke-width="1.7" stroke-linecap="round" stroke-linejoin="round"><path d="M4.5 4.5 a1.5 1.5 0 0 1 1.5 -1.5 H13 L18.5 8.5 V20 a1.5 1.5 0 0 1 -1.5 1.5 H6 a1.5 1.5 0 0 1 -1.5 -1.5 Z"/><path d="M13 3 V8.5 H18.5"/></svg>
<svg class="abs" style="left:40.0px;top:216.0px" width="24" height="24" viewBox="0 0 24 24" fill="none" stroke="#3b6fdc" stroke-width="1.6" stroke-linecap="round" stroke-linejoin="round"><path d="M10.5 5.2 A8.6 8.6 0 1 0 19.2 14 H10.5 Z"/><path d="M13.2 2.6 A8.4 8.4 0 0 1 21.6 11 H13.2 Z"/></svg>
<svg class="abs" style="left:30px;top:265px" width="26" height="26" viewBox="0 0 26 26" fill="#8a1fd0"><path d="M9.2 4.6 C10.4 9.6 11.4 10.8 16.6 12 C11.4 13.2 10.4 14.4 9.2 19.4 C8 14.4 7 13.2 1.8 12 C7 10.8 8 9.6 9.2 4.6Z" stroke="#8a1fd0" stroke-width="1.2" stroke-linejoin="round"/><path d="M18.8 1.4 C19.4 4.4 20.2 5.2 23.2 5.8 C20.2 6.4 19.4 7.2 18.8 10.2 C18.2 7.2 17.4 6.4 14.4 5.8 C17.4 5.2 18.2 4.4 18.8 1.4Z" stroke="#8a1fd0" stroke-width=".9" stroke-linejoin="round"/><path d="M17.3 14.8 C17.9 17.6 18.6 18.3 21.4 18.9 C18.6 19.5 17.9 20.2 17.3 23 C16.7 20.2 16 19.5 13.2 18.9 C16 18.3 16.7 17.6 17.3 14.8Z" stroke="#8a1fd0" stroke-width=".9" stroke-linejoin="round"/></svg>
<svg class="abs" style="left:30.5px;top:319.0px" width="24" height="16" viewBox="0 0 24 16" fill="none" stroke="#55565c" stroke-width="1.9" stroke-linecap="round" stroke-linejoin="round"><path d="M2.5 13.5 L9 7 L13 11 L21 3.5"/><path d="M15.5 3 H21.5 V9"/></svg>
<svg class="abs" style="left:31.0px;top:475.5px" width="22" height="24" viewBox="0 0 22 24" fill="none" stroke="#55565c" stroke-width="1.7" stroke-linecap="round" stroke-linejoin="round"><circle cx="11" cy="7.3" r="4.6"/><path d="M2.2 22 C3 16.2 6.4 13.8 11 13.8 C15.6 13.8 19 16.2 19.8 22"/></svg>
<svg class="abs" style="left:30.0px;top:525.5px" width="24" height="24" viewBox="0 0 24 24" fill="none" stroke="#55565c" stroke-width="1.6" stroke-linecap="round" stroke-linejoin="round"><circle cx="8.3" cy="8.3" r="5.6"/><circle cx="6.8" cy="6.8" r="1" fill="#55565c"/><path d="M12.4 12.2 L21.5 21 V23 H18 V20.5 H15.5 V18 L13 15.6"/></svg>
<svg class="abs" style="left:30.0px;top:574.5px" width="24" height="26" viewBox="0 0 24 26" fill="none" stroke="#55565c" stroke-width="1.6" stroke-linecap="round" stroke-linejoin="round"><circle cx="15.5" cy="5.6" r="4"/><circle cx="7.6" cy="13.6" r="4"/><path d="M1.5 25 C2 20.5 4.3 18.6 7.6 18.6 C10.9 18.6 13.2 20.5 13.7 25"/><path d="M12.2 11.4 C13.2 10.8 14.3 10.6 15.5 10.6 C18.8 10.6 21.2 12.5 21.7 17"/></svg>
<svg class="abs" style="left:30.0px;top:625.5px" width="24" height="24" viewBox="0 0 24 24" fill="none" stroke="#55565c" stroke-width="1.9" stroke-linecap="round" stroke-linejoin="round"><rect x="2.2" y="2.2" width="19.6" height="19.6"/><path d="M2.2 8.2 H21.8 M9 8.2 V21.8"/></svg>
<svg class="abs" style="left:29.0px;top:677.5px" width="26" height="20" viewBox="0 0 26 20" fill="none" stroke="#55565c" stroke-width="1.6" stroke-linecap="round" stroke-linejoin="round"><path d="M7.5 5.5 L2.5 10 L7.5 14.5"/><path d="M18.5 5.5 L23.5 10 L18.5 14.5"/><path d="M15 3 L11 17"/></svg>
<svg class="abs" style="left:30.0px;top:725.5px" width="24" height="24" viewBox="0 0 24 24" fill="none" stroke="#55565c" stroke-width="1.6" stroke-linecap="round" stroke-linejoin="round"><rect x="2" y="4.2" width="20" height="17.6" rx="2.2"/><path d="M2 9 H22 M6.8 1.8 V5.5 M17.2 1.8 V5.5"/><path d="M5.5 12.7h1M9.2 12.7h1M12.9 12.7h1M16.6 12.7h1M5.5 15.7h1M9.2 15.7h1M12.9 15.7h1M16.6 15.7h1M5.5 18.7h1M9.2 18.7h1M12.9 18.7h1M16.6 18.7h1" stroke-width="1.4"/></svg>
<svg class="abs" style="left:35.0px;top:885.5px" width="14" height="22" viewBox="0 0 14 22" fill="none" stroke="#7a7b80" stroke-width="1.3" stroke-linecap="round" stroke-linejoin="round"><path d="M2.8 5.8 C2.8 3.2 4.6 1.6 7 1.6 C9.4 1.6 11.2 3.2 11.2 5.6 C11.2 9 7 9.2 7 13.6"/><circle cx="7" cy="19.2" r="0.6" fill="#7a7b80"/></svg>
<div class="abs" style="left:80px;top:0;width:70px;height:913px;background:#fff"></div>
<div class="abs" style="left:1830px;top:0;width:72px;height:913px;background:#fff"></div>
<div class="abs" style="left:1901px;top:0;width:17px;height:913px;background:#fbfbfb"></div>
<div class="abs" style="left:1905px;top:212px;width:11px;height:570px;border-radius:6px;background:#8b8b8b"></div>
<svg class="abs" style="left:1903px;top:8px" width="15" height="10" viewBox="0 0 15 10"><path d="M1.2 9 L7.5 1.2 L13.8 9 Z" fill="#8b8b8b" stroke="#8b8b8b" stroke-width="1" stroke-linejoin="round"/></svg>
<svg class="abs" style="left:1903px;top:899px" width="15" height="10" viewBox="0 0 15 10"><path d="M1.2 1 L7.5 8.8 L13.8 1 Z" fill="#8b8b8b" stroke="#8b8b8b" stroke-width="1" stroke-linejoin="round"/></svg>
<div class="abs" style="left:183.2px;top:-11.4px;width:18.8px;height:18.8px;border-radius:9.4px;background:#3b6fdc"></div>
<span class="t" style="left:216.50px;top:-10.88px;font-size:19px;color:#74757c;transform-origin:0 0;transform:scaleX(1.0488);">Nenhuma descrição disponível</span>
<div class="abs" style="left:0;top:0;width:1918px;height:2px;background:linear-gradient(#f0f0f2,#d2d2d6)"></div>
<div class="abs" style="left:1769px;top:52px;width:1px;height:861px;background:#b5b5b5"></div>
<svg class="abs" style="left:1783px;top:69px" width="14" height="14" viewBox="0 0 14 14" fill="none" stroke="#2a2a33" stroke-width="1.4" stroke-linecap="round" stroke-linejoin="round"><path d="M6.6 3 L2.8 7 L6.6 11"/><path d="M10.8 3 L7 7 L10.8 11"/></svg>
<svg class="abs" style="left:1786px;top:103px" width="14" height="14" viewBox="0 0 14 14" fill="none" stroke="#2a2a33" stroke-width="1.2"><path d="M11.5 2.5 V13"/><path d="M7.8 5.5 V13"/><path d="M4 8 V11"/></svg>
<div class="abs" style="left:1782px;top:129px;width:20px;height:60px"><span class="t" style="left:0;top:0;font-size:18.5px;font-weight:bold;color:#23232b;transform-origin:0 0;transform:translate(19px,0) rotate(90deg) scaleX(.98);-webkit-text-stroke:.2px #23232b">Filtros</span></div>
</body>
</html>
